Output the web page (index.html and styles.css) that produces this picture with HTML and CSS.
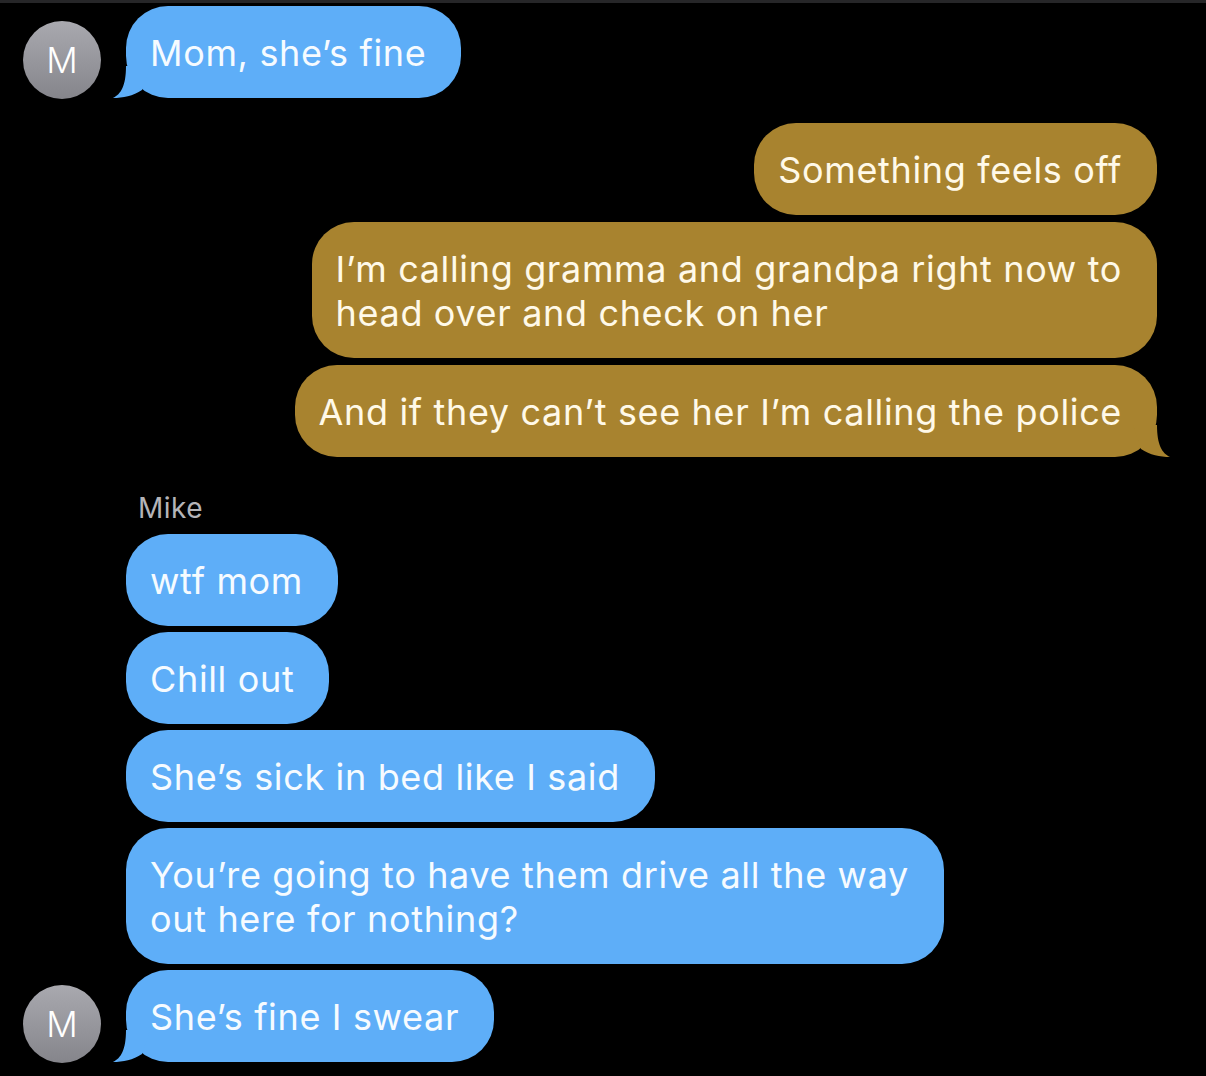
FILE: index.html
```html
<!DOCTYPE html>
<html lang="en">
<head>
<meta charset="utf-8">
<title>Messages</title>
<link rel="stylesheet" href="styles.css">
</head>
<body>
<div class="topbar"></div>
<main class="thread">
  <div class="row received">
    <div class="avatar">M</div>
    <div class="bubble blue tail-left">Mom, she’s fine
      <svg class="tail tail-l" width="40" height="34" viewBox="0 0 40 34"><path d="M14,2 C14,22 9,30 1,34 C11,34 21,32 30,26 L38,2 Z"/></svg>
    </div>
  </div>

  <div class="group sent-group">
    <div class="bubble gold">Something feels off</div>
    <div class="bubble gold">I’m calling gramma and grandpa right now to<br>head over and check on her</div>
    <div class="bubble gold tail-right">And if they can’t see her I’m calling the police
      <svg class="tail tail-r" width="40" height="34" viewBox="0 0 40 34"><path d="M26,2 C26,22 31,30 39,34 C29,34 19,32 10,26 L2,2 Z"/></svg>
    </div>
  </div>

  <div class="sender">Mike</div>
  <div class="group received-group">
    <div class="row received"><div class="avatar-slot"></div><div class="bubble blue">wtf mom</div></div>
    <div class="row received"><div class="avatar-slot"></div><div class="bubble blue">Chill out</div></div>
    <div class="row received"><div class="avatar-slot"></div><div class="bubble blue">She’s sick in bed like I said</div></div>
    <div class="row received"><div class="avatar-slot"></div><div class="bubble blue">You’re going to have them drive all the way<br>out here for nothing?</div></div>
    <div class="row received">
      <div class="avatar">M</div>
      <div class="bubble blue tail-left">She’s fine I swear
        <svg class="tail tail-l" width="40" height="34" viewBox="0 0 40 34"><path d="M14,2 C14,22 9,30 1,34 C11,34 21,32 30,26 L38,2 Z"/></svg>
      </div>
    </div>
  </div>
</main>
</body>
</html>
```

FILE: styles.css
```css
* { box-sizing: border-box; }
html, body {
  margin: 0;
  padding: 0;
  background: #000;
  width: 1206px;
  height: 1076px;
  overflow: hidden;
  font-family: Inter, "Noto Sans", "Liberation Sans", sans-serif;
}
.topbar {
  height: 3px;
  background: #262628;
}
.thread {
  display: flex;
  flex-direction: column;
  padding: 3px 49px 0 23px;
}
.row {
  display: flex;
  align-items: flex-end;
  gap: 25px;
}
.avatar {
  width: 78px;
  height: 78px;
  border-radius: 50%;
  background: linear-gradient(#a9a9af, #85858b);
  color: #fff;
  font-size: 35px;
  font-weight: 300;
  display: flex;
  align-items: center;
  justify-content: center;
  flex-shrink: 0;
  margin-bottom: -1px;
}
.avatar-slot {
  width: 78px;
  flex-shrink: 0;
}
.bubble {
  position: relative;
  padding: 25px 35px 23px 24px;
  font-size: 36px;
  line-height: 44px;
  border-radius: 42px;
  letter-spacing: 0.65px;
  white-space: nowrap;
}
.blue { background: #5eaef8; color: #f6fbff; }
.gold { background: #a8832f; color: #fff9e8; }
.blue .tail { fill: #5eaef8; }
.gold .tail { fill: #a8832f; }
.tail {
  position: absolute;
  bottom: 0;
}
.tail-l { left: -14px; }
.tail-r { right: -14px; }
.group {
  display: flex;
  flex-direction: column;
}
.sent-group {
  align-items: flex-end;
  gap: 7px;
  margin-top: 25px;
}
.received-group {
  gap: 6px;
}
.sender {
  margin: 34px 0 9px 115px;
  height: 34px;
  font-size: 28px;
  line-height: 34px;
  letter-spacing: 0.5px;
  color: #b4b4b8;
}
```
